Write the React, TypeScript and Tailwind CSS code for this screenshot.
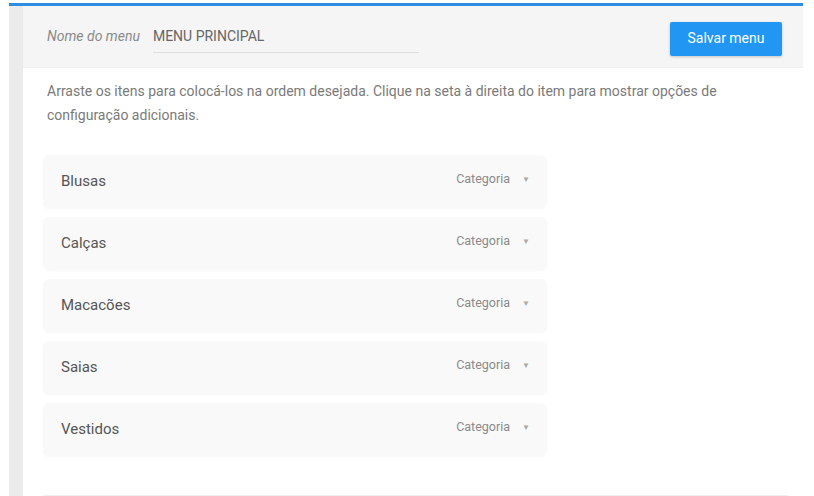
import { useState } from 'react';

const items = ['Blusas', 'Calças', 'Macacões', 'Saias', 'Vestidos'];

export default function App() {
  const [name, setName] = useState('MENU PRINCIPAL');

  return (
    <div className="flex h-[496px] w-[814px] overflow-hidden bg-white font-['Roboto',sans-serif]">
      <div className="ml-[9px] mt-[6px] w-[14px] bg-[#ebebeb]" />
      <div className="flex w-[780px] flex-col">
        <div className="-ml-[14px] mt-[3px] h-[3px] bg-[#2b8ee3]" />
        <div className="flex h-[61px] items-center justify-between bg-[#f5f5f5] pl-6 pr-[21px] shadow-[0_1px_1px_rgba(0,0,0,0.06)]">
          <div className="flex items-center">
            <span className="text-[14px] italic text-[#8a8a8a]">Nome do menu</span>
            <input
              value={name}
              onChange={(e) => setName(e.target.value)}
              className="ml-[13px] mt-[2px] h-[30px] w-[266px] border-b border-[#ddd] bg-transparent pb-[2px] text-[14px] text-[#666] outline-none"
            />
          </div>
          <button className="mt-[4px] h-[34px] w-[112px] rounded-[2px] bg-[#2196f3] text-[14px] text-white shadow-[0_1px_3px_rgba(0,0,0,0.2)]">
            Salvar menu
          </button>
        </div>

        <div className="flex-1 px-5 pt-[12px]">
          <p className="pl-1 text-[14px] leading-6 text-[#7a7a7a]">
            Arraste os itens para colocá-los na ordem desejada. Clique na seta à direita do item para mostrar opções de
            configuração adicionais.
          </p>

          <div className="mt-[28px] flex w-[504px] flex-col gap-[9px]">
            {items.map((item) => (
              <div
                key={item}
                className="flex h-[53px] items-center justify-between rounded-md bg-[#f9f9f9] pl-[18px] pr-[17px] shadow-[0_1px_2px_rgba(0,0,0,0.03)]"
              >
                <span className="text-[15px] text-[#555]">{item}</span>
                <div className="-mt-[4px] flex items-center gap-[12px]">
                  <span className="text-[12.5px] text-[#8a8a8a]">Categoria</span>
                  <span className="text-[8px] text-[#aaa]">▼</span>
                </div>
              </div>
            ))}
          </div>

          <div className="mt-[39px] h-px w-[745px] bg-[#f0f0f0]" />
        </div>
      </div>
    </div>
  );
}
